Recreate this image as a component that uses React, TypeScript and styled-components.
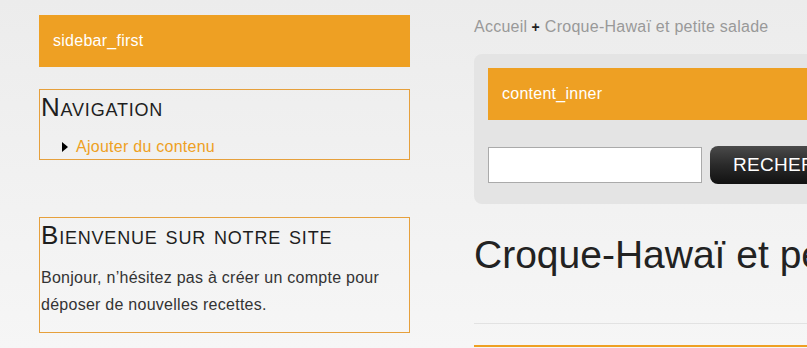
import styled, { createGlobalStyle } from 'styled-components';

const GlobalStyle = createGlobalStyle`
    html, body {
        margin: 0;
        height: 100%;
        overflow: hidden;
    }
    body {
        background: linear-gradient(to bottom, #ececec 0%, #f6f6f6 100%);
        font-family: 'Liberation Sans', Arial, sans-serif;
        color: #333;
        letter-spacing: 0.26px;
    }
`;

const Page = styled.div`
    display: flex;
    gap: 64px;
    padding: 15px 0 0 39px;
    width: 1200px;
`;

const Sidebar = styled.aside`
    width: 371px;
    flex-shrink: 0;
    display: flex;
    flex-direction: column;
`;

const Main = styled.main`
    width: 640px;
    flex-shrink: 0;
`;

const RegionLabel = styled.div`
    height: 52px;
    display: flex;
    align-items: center;
    padding-left: 14px;
    background: #eea023;
    color: #fff;
    font-size: 16px;
`;

const Block = styled.section<{ $mt: number }>`
    margin-top: ${({ $mt }) => $mt}px;
    border: 1px solid #e6a03c;
    padding: 2px 0 0 1px;
`;

const BlockTitle = styled.h2`
    margin: 0;
    font-size: 26px;
    line-height: 30px;
    font-weight: normal;
    font-variant: small-caps;
    letter-spacing: 0.8px;
    color: #1e1e1e;
`;

const NavList = styled.ul`
    list-style: none;
    margin: 14px 0 1px;
    padding: 0 0 0 21px;
`;

const NavItem = styled.li`
    display: flex;
    align-items: center;
    gap: 8px;
    line-height: 22px;
    font-size: 16px;

    &::before {
        content: '';
        width: 0;
        height: 0;
        border-top: 5px solid transparent;
        border-bottom: 5px solid transparent;
        border-left: 6px solid #000;
    }

    a {
        color: #eea023;
        text-decoration: none;
    }
`;

const BlockText = styled.p`
    margin: 14px 0 14px;
    font-size: 16px;
    line-height: 27px;
    color: #333;
`;

const Breadcrumb = styled.div`
    font-size: 16px;
    line-height: 24px;
    color: #999;

    .sep {
        color: #222;
        font-weight: bold;
        font-size: 14px;
        margin: 0 5px 0 4px;
    }
`;

const ContentBox = styled.div`
    margin-top: 15px;
    background: #e4e4e4;
    border-radius: 8px;
    padding: 14px 14px 20px;
`;

const SearchForm = styled.form`
    display: flex;
    align-items: center;
    gap: 8px;
    margin-top: 26px;
`;

const SearchInput = styled.input`
    width: 214px;
    height: 36px;
    box-sizing: border-box;
    border: 1px solid #aaa;
    background: #fff;
    margin: 0;
`;

const SearchButton = styled.button`
    height: 38px;
    padding: 0 23px;
    border: none;
    border-radius: 8px;
    background: linear-gradient(to bottom, #4a4a4a 0%, #2a2a2a 50%, #111 100%);
    color: #fff;
    font-family: 'Liberation Sans', Arial, sans-serif;
    font-size: 19px;
    letter-spacing: 0.3px;
`;

const PageTitle = styled.h1`
    margin: 28px 0 0;
    font-size: 39px;
    line-height: 46px;
    font-weight: normal;
    letter-spacing: 0;
    color: #222;
    white-space: nowrap;
`;

const Rule = styled.hr<{ $color: string; $size: number; $mt: number }>`
    margin: ${({ $mt }) => $mt}px 0 0;
    border: none;
    height: ${({ $size }) => $size}px;
    background: ${({ $color }) => $color};
`;

const App = () => {
    return (
        <>
            <GlobalStyle />
            <Page>
                <Sidebar>
                    <RegionLabel>sidebar_first</RegionLabel>
                    <Block $mt={22}>
                        <BlockTitle>Navigation</BlockTitle>
                        <NavList>
                            <NavItem>
                                <a href="#">Ajouter du contenu</a>
                            </NavItem>
                        </NavList>
                    </Block>
                    <Block $mt={57}>
                        <BlockTitle>Bienvenue sur notre site</BlockTitle>
                        <BlockText>
                            Bonjour, n’hésitez pas à créer un compte pour déposer de nouvelles recettes.
                        </BlockText>
                    </Block>
                </Sidebar>
                <Main>
                    <Breadcrumb>
                        Accueil<span className="sep">+</span>Croque-Hawaï et petite salade
                    </Breadcrumb>
                    <ContentBox>
                        <RegionLabel>content_inner</RegionLabel>
                        <SearchForm onSubmit={(e) => e.preventDefault()}>
                            <SearchInput type="text" />
                            <SearchButton type="submit">RECHERCHER</SearchButton>
                        </SearchForm>
                    </ContentBox>
                    <PageTitle>Croque-Hawaï et petite salade</PageTitle>
                    <Rule $color="#e2e2e2" $size={1} $mt={45} />
                    <Rule $color="#eea023" $size={2} $mt={21} />
                </Main>
            </Page>
        </>
    );
};

export default App;
